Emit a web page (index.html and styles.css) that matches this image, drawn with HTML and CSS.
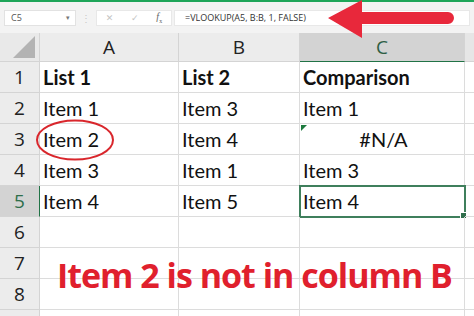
FILE: index.html
```html
<!DOCTYPE html>
<html lang="en">
<head>
  <meta charset="UTF-8">
  <title>VLOOKUP comparison</title>
  <link rel="stylesheet" href="styles.css">
</head>
<body>
  <div class="sheet">
    <div class="topbar"></div>

    <div class="toolbar">
      <div class="namebox">
        <span>C5</span>
        <span class="caret">&#9662;</span>
      </div>
      <div class="dots">&#8942;</div>
      <div class="fxbox">
        <span class="tool">&#10005;</span>
        <span class="tool">&#10003;</span>
        <span class="tool fx"><i>f</i><sub>x</sub></span>
      </div>
      <div class="formula">=VLOOKUP(A5, B:B, 1, FALSE)</div>
    </div>

    <div class="grid">
      <div class="corner"><span class="tri"></span></div>
      <div class="colhead">A</div>
      <div class="colhead">B</div>
      <div class="colhead active">C</div>
      <div class="colhead rest"></div>

      <div class="rowhead">1</div>
      <div class="cell bold">List 1</div>
      <div class="cell bold">List 2</div>
      <div class="cell bold">Comparison</div>
      <div class="cell rest"></div>

      <div class="rowhead">2</div>
      <div class="cell">Item 1</div>
      <div class="cell">Item 3</div>
      <div class="cell">Item 1</div>
      <div class="cell rest"></div>

      <div class="rowhead">3</div>
      <div class="cell">Item 2</div>
      <div class="cell">Item 4</div>
      <div class="cell center"><span class="flag"></span>#N/A</div>
      <div class="cell rest"></div>

      <div class="rowhead">4</div>
      <div class="cell">Item 3</div>
      <div class="cell">Item 1</div>
      <div class="cell">Item 3</div>
      <div class="cell rest"></div>

      <div class="rowhead active">5</div>
      <div class="cell">Item 4</div>
      <div class="cell">Item 5</div>
      <div class="cell selected">Item 4<span class="handle"></span></div>
      <div class="cell rest"></div>

      <div class="rowhead">6</div>
      <div class="cell"></div>
      <div class="cell"></div>
      <div class="cell"></div>
      <div class="cell rest"></div>

      <div class="rowhead">7</div>
      <div class="cell"></div>
      <div class="cell"></div>
      <div class="cell"></div>
      <div class="cell rest"></div>

      <div class="rowhead">8</div>
      <div class="cell"></div>
      <div class="cell"></div>
      <div class="cell"></div>
      <div class="cell rest"></div>

      <div class="rowhead"></div>
      <div class="cell"></div>
      <div class="cell"></div>
      <div class="cell"></div>
      <div class="cell rest"></div>
    </div>

    <!-- annotations drawn over the sheet -->
    <svg class="circle" width="80" height="44" viewBox="0 0 80 44">
      <ellipse cx="40" cy="22" rx="38" ry="19.5" fill="none" stroke="#d9262c" stroke-width="2"/>
    </svg>
    <svg class="arrow" width="130" height="40" viewBox="0 0 130 40">
      <path d="M2 18 L36 0 L36 12 L122 12 A6 6 0 0 1 122 24 L36 24 L36 38 Z" fill="#e8283b"/>
    </svg>
    <div class="note">Item 2 is not in column B</div>
  </div>
</body>
</html>
```

FILE: styles.css
```css
body {
  margin: 0;
  background: #fff;
  font-family: Lato, 'Open Sans', sans-serif;
  color: #111;
}
.sheet {
  position: relative;
  width: 474px;
  height: 316px;
  overflow: hidden;
}
.topbar {
  height: 2px;
  background: #1fa65a;
}
.toolbar {
  display: flex;
  align-items: center;
  height: 31px;
  padding: 0 4px;
  background: #f3f3f3;
}
.namebox {
  display: flex;
  justify-content: space-between;
  align-items: center;
  width: 72px;
  height: 16px;
  padding: 0 5px 0 6px;
  box-sizing: border-box;
  background: #fff;
  border: 1px solid #e2e2e2;
  font-family: 'Open Sans', sans-serif;
  font-size: 9px;
  color: #555;
}
.caret {
  font-size: 7px;
  color: #777;
}
.dots {
  width: 20px;
  text-align: center;
  font-size: 10px;
  color: #c8c8c8;
}
.fxbox {
  display: flex;
  align-items: center;
  justify-content: space-around;
  width: 76px;
  height: 16px;
  background: #fff;
  border: 1px solid #e8e8e8;
  box-sizing: border-box;
}
.tool {
  font-family: 'DejaVu Sans', sans-serif;
  font-size: 9px;
  color: #c4c4c4;
}
.fx {
  font-family: 'Liberation Serif', serif;
  font-size: 10px;
  color: #666;
}
.fx sub {
  font-size: 6px;
}
.formula {
  flex: 1;
  height: 16px;
  margin-left: 2px;
  padding-left: 10px;
  background: #fff;
  border: 1px solid #e8e8e8;
  box-sizing: border-box;
  font-family: 'Open Sans', sans-serif;
  font-size: 9px;
  line-height: 14px;
  color: #333;
}
.grid {
  display: grid;
  grid-template-columns: 40px 139px 121px 165px 1fr;
  grid-template-rows: 29px repeat(9, 31px);
}
.corner {
  position: relative;
  background: #e9e9e9;
  border-right: 1px solid #d4d4d4;
  border-bottom: 1px solid #d4d4d4;
}
.tri {
  position: absolute;
  right: 4px;
  bottom: 3px;
  width: 0;
  height: 0;
  border-left: 22px solid transparent;
  border-bottom: 22px solid #b3b3b3;
}
.colhead {
  display: flex;
  align-items: center;
  justify-content: center;
  background: #ececec;
  border-right: 1px solid #d4d4d4;
  border-bottom: 1px solid #d4d4d4;
  font-family: 'Open Sans', sans-serif;
  font-size: 19px;
  color: #222;
}
.colhead.active {
  background: #d3d3d3;
  border-bottom: 1px solid #217346;
  color: #2e5e44;
}
.colhead.rest {
  background: #e6e6e6;
  border-right: none;
}
.rowhead {
  display: flex;
  align-items: center;
  justify-content: center;
  background: #ececec;
  border-right: 1px solid #d4d4d4;
  border-bottom: 1px solid #d4d4d4;
  font-family: 'Open Sans', sans-serif;
  font-size: 19px;
  color: #222;
}
.rowhead.active {
  background: #d3d3d3;
  border-right: 1px solid #217346;
  color: #2e6e4a;
}
.cell {
  position: relative;
  display: flex;
  align-items: center;
  padding-left: 3px;
  border-right: 1px solid #dcdcdc;
  border-bottom: 1px solid #dcdcdc;
  font-size: 20px;
  color: #111;
}
.cell.rest {
  border-right: none;
}
.bold {
  font-weight: bold;
}
.center {
  justify-content: center;
}
.flag {
  position: absolute;
  left: 1px;
  top: 1px;
  width: 0;
  height: 0;
  border-top: 6px solid #1d7a3e;
  border-right: 6px solid transparent;
}
.selected {
  outline: 2px solid #3f7f5c;
  outline-offset: -1px;
}
.handle {
  position: absolute;
  right: -3px;
  bottom: -3px;
  width: 5px;
  height: 5px;
  background: #2f6e4c;
  border: 1px solid #fff;
}
.circle {
  position: absolute;
  left: 35px;
  top: 118px;
}
.arrow {
  position: absolute;
  left: 326px;
  top: 0;
}
.note {
  position: absolute;
  left: 57px;
  top: 252px;
  font-family: 'Open Sans', sans-serif;
  font-weight: bold;
  font-size: 34px;
  letter-spacing: -1px;
  color: #e0202d;
  white-space: nowrap;
}
```
